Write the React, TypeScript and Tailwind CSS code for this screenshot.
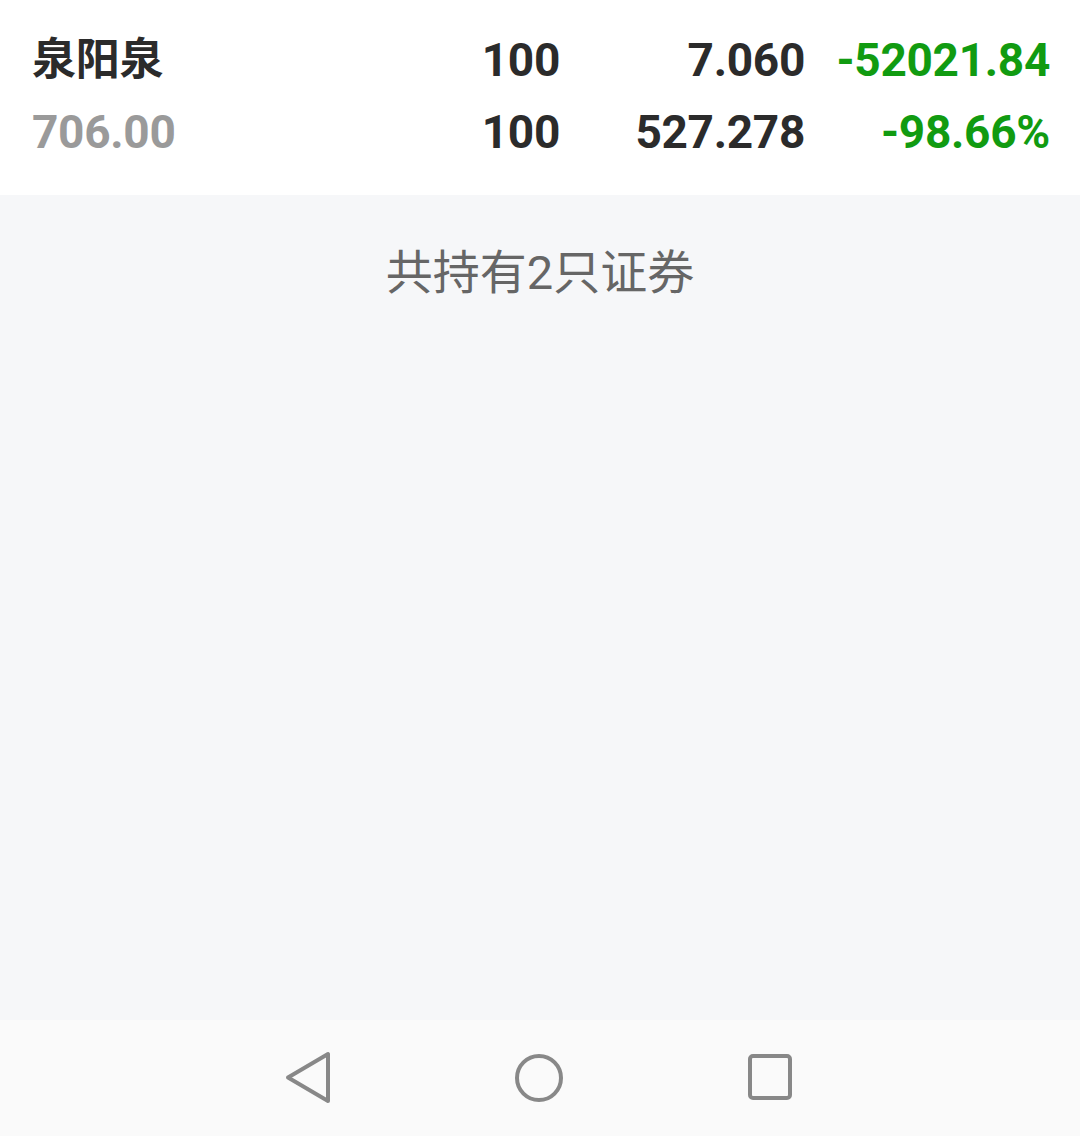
const rows = [
  { name: "泉阳泉", nameCls: "text-[#2b2b2b] text-[44px]", a: "100", b: "7.060", c: "-52021.84" },
  { name: "706.00", nameCls: "text-[#9a9a9a] text-[46px]", a: "100", b: "527.278", c: "-98.66%" },
];

const App = () => {
  return (
    <div className="flex h-[1136px] w-[1080px] flex-col bg-[#f6f7f9] font-['Roboto','Noto_Sans_CJK_SC',sans-serif]">
      <div className="bg-white pt-[24px] pb-[27px] pl-[32px] pr-[30px]">
        {rows.map((r) => (
          <div key={r.c} className="flex h-[72px] items-center font-bold text-[46px] tracking-[-0.3px]">
            <div className={`flex-1 ${r.nameCls}`}>{r.name}</div>
            <div className="w-[150px] text-right text-[#2b2b2b]">{r.a}</div>
            <div className="w-[245px] text-right text-[#2b2b2b]">{r.b}</div>
            <div className="w-[245px] text-right text-[#119b11]">{r.c}</div>
          </div>
        ))}
      </div>

      <div className="flex flex-1 justify-center pt-[48px]">
        <span className="text-[47px] leading-[60px] text-[#666666]">共持有2只证券</span>
      </div>

      <div className="flex h-[116px] items-center justify-center gap-[171px] bg-[#fafafa] pr-[2px]">
        <svg width="60" height="56" viewBox="0 0 60 56">
          <path d="M50 4 L50 51 L10 27.5 Z" fill="none" stroke="#888" strokeWidth="4" strokeLinejoin="round" />
        </svg>
        <svg width="60" height="56" viewBox="0 0 60 56">
          <circle cx="30" cy="28" r="22" fill="none" stroke="#888" strokeWidth="4" />
        </svg>
        <svg width="60" height="56" viewBox="0 0 60 56">
          <rect x="10" y="6" width="40" height="42" rx="3" fill="none" stroke="#888" strokeWidth="4" />
        </svg>
      </div>
    </div>
  );
};

export default App;
